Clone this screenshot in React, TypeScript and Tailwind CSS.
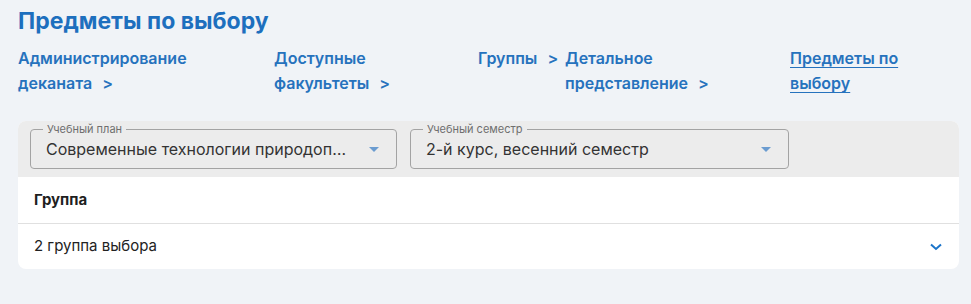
import React from "react";

const font = { fontFamily: "Inter, 'Noto Sans', sans-serif" };

function Select({ label, value, width }: { label: string; value: string; width: string }) {
  return (
    <div className={`relative h-[40px] ${width}`}>
      <fieldset className="pointer-events-none absolute inset-0 -top-[5px] m-0 rounded-[4px] border border-[#a3a3a3] px-[12px]">
        <legend className="px-[4px] text-[11px] leading-[11px] text-[#6f6f6f]">{label}</legend>
      </fieldset>
      <div className="flex h-full items-center pl-[16px] pr-[18px]">
        <span className="flex-1 truncate text-[16px] text-[#333]">{value}</span>
        <svg width="10" height="5" viewBox="0 0 10 5" className="ml-[14px]">
          <path d="M0 0 L10 0 L5 5 Z" fill="#6b9cd0" />
        </svg>
      </div>
    </div>
  );
}

export default function App() {
  return (
    <div className="min-h-[304px] w-[971px] bg-[#f0f3f7] px-[18px] pt-[6px]" style={font}>
      <h1 className="text-[23px] font-bold leading-[30px] text-[#1d6fbe]">Предметы по выбору</h1>
      <div className="mt-[10px] flex text-[16px] font-semibold leading-[25px] text-[#2672bd]">
        <div className="w-[256px]">
          Администрирование<br />деканата<span className="ml-[10px]">&gt;</span>
        </div>
        <div className="w-[204px]">
          Доступные<br />факультеты<span className="ml-[10px]">&gt;</span>
        </div>
        <div className="w-[87px]">
          Группы<span className="ml-[10px]">&gt;</span>
        </div>
        <div className="w-[225px]">
          Детальное<br />представление<span className="ml-[10px]">&gt;</span>
        </div>
        <div className="underline underline-offset-[3px]">
          Предметы по<br />выбору
        </div>
      </div>
      <div className="mt-[25px] w-[941px] overflow-hidden rounded-[8px] bg-white">
        <div className="flex gap-[13px] bg-[#ececec] px-[12px] pt-[8px] pb-[8px]">
          <Select label="Учебный план" value="Современные технологии природопользования" width="w-[367px]" />
          <Select label="Учебный семестр" value="2-й курс, весенний семестр" width="w-[379px]" />
        </div>
        <div className="flex h-[47px] items-center border-b border-[#e0e0e0] px-[16px] text-[15px] font-bold text-[#1f1f1f]">
          Группа
        </div>
        <div className="flex h-[45px] items-center px-[16px] text-[15px] text-[#222]">
          <span className="flex-1">2 группа выбора</span>
          <svg width="12" height="8" viewBox="0 0 12 8" className="mr-[1px]">
            <path d="M1 1.5 L6 6 L11 1.5" fill="none" stroke="#1b74c9" strokeWidth="2" />
          </svg>
        </div>
      </div>
    </div>
  );
}
